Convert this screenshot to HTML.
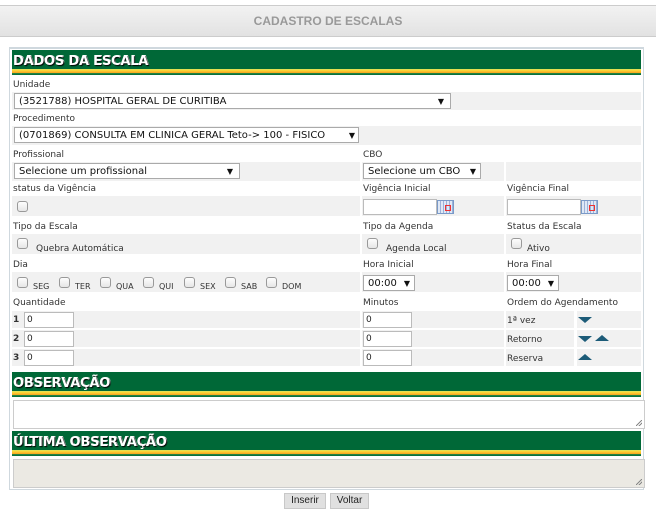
<!DOCTYPE html>
<html><head><meta charset="utf-8"><style>
*{box-sizing:border-box;margin:0;padding:0}
body{width:656px;height:522px;background:#fff;font-family:"DejaVu Sans",Verdana,sans-serif;font-size:9px;color:#222;position:relative;overflow:hidden}
.a{position:absolute}
.top{left:0;top:5px;width:656px;height:32px;background:linear-gradient(#f2f2f2,#e2e2e2);border-top:1px solid #ccc;border-bottom:1px solid #ccc;text-align:center;line-height:30px;font-family:"Liberation Sans",Arial,sans-serif;font-weight:bold;font-size:12px;color:#999}
.box{left:9px;top:47px;width:635px;height:443px;border:1px solid #cfd8de;border-top-width:2px}
.band{left:12px;width:629px;height:25px;background:#006837}
.band span{position:absolute;left:1px;top:4px;font-family:"DejaVu Sans",Verdana,sans-serif;font-weight:bold;font-size:13px;letter-spacing:-0.2px;color:#fff;text-shadow:1px 1px 1px #000,1px 0 0 #fff}
.band i{position:absolute;left:0;right:0;top:18px;height:7px;background:linear-gradient(#006837 0,#006837 1px,#cbe36b 1px,#f9dc3a 2px,#fbb72a 4px,#f6a21a 5px,#2d8a47 5px,#006837 7px)}
.g{background:#f1f1f1}
.l{font-size:9px;color:#333;margin-top:1px}
.sel{background:#fff;border:1px solid #aaa;height:16px;font-size:10px;line-height:16px;padding-left:4px;color:#111}
.sel b{position:absolute;right:6px;top:0;font-size:8px}
.cb{width:11px;height:11px;border:1px solid #999;border-radius:3px;background:linear-gradient(#fdfdfd,#e6e6e6)}
.in{background:#fff;border:1px solid #bbb;height:16px;font-size:9px;line-height:15px;padding-left:2px}
.cal{width:17px;height:14px;border:1px solid #7a9ac8;background:repeating-linear-gradient(90deg,#dfe8f6 0 2px,#9db2d8 2px 3px);}
.cal:after{content:"";position:absolute;right:2px;bottom:2px;width:4px;height:4px;border:1px solid #e33}
.ta{left:13px;width:632px;height:29px;border:1px solid #ccc;background:#fff}
.ta:after{content:"";position:absolute;right:2px;bottom:2px;width:6px;height:6px;background:linear-gradient(135deg,transparent 45%,#888 45%,#888 55%,transparent 55%,transparent 70%,#888 70%,#888 80%,transparent 80%)}
.btn{top:493px;height:16px;background:#e0e0e0;border:1px solid #c8c8c8;font-family:"Liberation Sans",Arial,sans-serif;font-size:10px;line-height:14px;text-align:center;color:#222}
.dn{width:0;height:0;border-left:7px solid transparent;border-right:7px solid transparent;border-top:6px solid #1c5b78}
.up{width:0;height:0;border-left:7px solid transparent;border-right:7px solid transparent;border-bottom:6px solid #1c5b78}
</style></head><body>
<div class="a top">CADASTRO DE ESCALAS</div>
<div class="a box"></div>
<div class="a band" style="top:50px"><span>DADOS DA ESCALA</span><i></i></div>

<div class="a l" style="left:13px;top:79px">Unidade</div>
<div class="a g" style="left:12px;top:92px;width:629px;height:18px"></div>
<div class="a sel" style="left:14px;top:93px;width:437px">(3521788) HOSPITAL GERAL DE CURITIBA<b>▼</b></div>

<div class="a l" style="left:13px;top:113px">Procedimento</div>
<div class="a g" style="left:12px;top:126px;width:629px;height:19px"></div>
<div class="a sel" style="left:14px;top:127px;width:345px">(0701869) CONSULTA EM CLINICA GERAL Teto-&gt; 100 - FISICO<b style="right:3px">▼</b></div>

<div class="a l" style="left:13px;top:149px">Profissional</div>
<div class="a l" style="left:363px;top:149px">CBO</div>
<div class="a g" style="left:12px;top:162px;width:348px;height:19px"></div>
<div class="a g" style="left:362px;top:162px;width:142px;height:19px"></div>
<div class="a g" style="left:506px;top:162px;width:135px;height:19px"></div>
<div class="a sel" style="left:14px;top:163px;width:226px">Selecione um profissional<b>▼</b></div>
<div class="a sel" style="left:363px;top:163px;width:118px">Selecione um CBO<b style="right:4px">▼</b></div>

<div class="a l" style="left:13px;top:183px">status da Vigência</div>
<div class="a l" style="left:363px;top:183px">Vigência Inicial</div>
<div class="a l" style="left:507px;top:183px">Vigência Final</div>
<div class="a g" style="left:12px;top:196px;width:348px;height:20px"></div>
<div class="a g" style="left:362px;top:196px;width:142px;height:20px"></div>
<div class="a g" style="left:506px;top:196px;width:135px;height:20px"></div>
<div class="a cb" style="left:17px;top:201px"></div>
<div class="a in" style="left:363px;top:199px;width:74px"></div>
<div class="a cal" style="left:437px;top:200px"></div>
<div class="a in" style="left:507px;top:199px;width:74px"></div>
<div class="a cal" style="left:581px;top:200px"></div>

<div class="a l" style="left:13px;top:221px">Tipo da Escala</div>
<div class="a l" style="left:363px;top:221px">Tipo da Agenda</div>
<div class="a l" style="left:507px;top:221px">Status da Escala</div>
<div class="a g" style="left:12px;top:234px;width:348px;height:20px"></div>
<div class="a g" style="left:362px;top:234px;width:142px;height:20px"></div>
<div class="a g" style="left:506px;top:234px;width:135px;height:20px"></div>
<div class="a cb" style="left:17px;top:238px"></div><div class="a l" style="left:36px;top:243px">Quebra Automática</div>
<div class="a cb" style="left:367px;top:238px"></div><div class="a l" style="left:386px;top:243px">Agenda Local</div>
<div class="a cb" style="left:511px;top:238px"></div><div class="a l" style="left:527px;top:243px">Ativo</div>

<div class="a l" style="left:13px;top:259px">Dia</div>
<div class="a l" style="left:363px;top:259px">Hora Inicial</div>
<div class="a l" style="left:507px;top:259px">Hora Final</div>
<div class="a g" style="left:12px;top:272px;width:348px;height:20px"></div>
<div class="a g" style="left:362px;top:272px;width:142px;height:20px"></div>
<div class="a g" style="left:506px;top:272px;width:135px;height:20px"></div>
<div class="a cb" style="left:17px;top:277px"></div><div class="a l" style="left:33px;top:281px;font-size:8px">SEG</div>
<div class="a cb" style="left:59px;top:277px"></div><div class="a l" style="left:75px;top:281px;font-size:8px">TER</div>
<div class="a cb" style="left:100px;top:277px"></div><div class="a l" style="left:116px;top:281px;font-size:8px">QUA</div>
<div class="a cb" style="left:143px;top:277px"></div><div class="a l" style="left:159px;top:281px;font-size:8px">QUI</div>
<div class="a cb" style="left:184px;top:277px"></div><div class="a l" style="left:200px;top:281px;font-size:8px">SEX</div>
<div class="a cb" style="left:225px;top:277px"></div><div class="a l" style="left:241px;top:281px;font-size:8px">SAB</div>
<div class="a cb" style="left:266px;top:277px"></div><div class="a l" style="left:282px;top:281px;font-size:8px">DOM</div>
<div class="a sel" style="left:363px;top:275px;width:52px">00:00<b style="right:4px">▼</b></div>
<div class="a sel" style="left:507px;top:275px;width:52px">00:00<b style="right:4px">▼</b></div>

<div class="a l" style="left:13px;top:297px">Quantidade</div>
<div class="a l" style="left:363px;top:297px">Minutos</div>
<div class="a l" style="left:507px;top:297px">Ordem do Agendamento</div>

<div class="a g" style="left:12px;top:311px;width:348px;height:17px"></div>
<div class="a g" style="left:362px;top:311px;width:142px;height:17px"></div>
<div class="a g" style="left:506px;top:311px;width:68px;height:17px"></div>
<div class="a g" style="left:577px;top:311px;width:64px;height:17px"></div>
<div class="a g" style="left:12px;top:330px;width:348px;height:17px"></div>
<div class="a g" style="left:362px;top:330px;width:142px;height:17px"></div>
<div class="a g" style="left:506px;top:330px;width:68px;height:17px"></div>
<div class="a g" style="left:577px;top:330px;width:64px;height:17px"></div>
<div class="a g" style="left:12px;top:349px;width:348px;height:17px"></div>
<div class="a g" style="left:362px;top:349px;width:142px;height:17px"></div>
<div class="a g" style="left:506px;top:349px;width:68px;height:17px"></div>
<div class="a g" style="left:577px;top:349px;width:64px;height:17px"></div>

<div class="a l" style="left:13px;top:314px;font-weight:bold">1</div>
<div class="a l" style="left:13px;top:333px;font-weight:bold">2</div>
<div class="a l" style="left:13px;top:352px;font-weight:bold">3</div>
<div class="a in" style="left:24px;top:312px;width:50px">0</div>
<div class="a in" style="left:24px;top:331px;width:50px">0</div>
<div class="a in" style="left:24px;top:350px;width:50px">0</div>
<div class="a in" style="left:363px;top:312px;width:49px">0</div>
<div class="a in" style="left:363px;top:331px;width:49px">0</div>
<div class="a in" style="left:363px;top:350px;width:49px">0</div>
<div class="a l" style="left:507px;top:315px">1ª vez</div>
<div class="a l" style="left:507px;top:334px">Retorno</div>
<div class="a l" style="left:507px;top:353px">Reserva</div>
<div class="a dn" style="left:578px;top:317px"></div>
<div class="a dn" style="left:578px;top:336px"></div>
<div class="a up" style="left:595px;top:335px"></div>
<div class="a up" style="left:578px;top:354px"></div>

<div class="a band" style="top:372px"><span>OBSERVAÇÃO</span><i></i></div>
<div class="a ta" style="top:400px"></div>
<div class="a band" style="top:431px"><span>ÚLTIMA OBSERVAÇÃO</span><i></i></div>
<div class="a ta" style="top:459px;background:#ebe9e3"></div>

<div class="a btn" style="left:284px;width:42px">Inserir</div>
<div class="a btn" style="left:330px;width:39px">Voltar</div>
</body></html>
